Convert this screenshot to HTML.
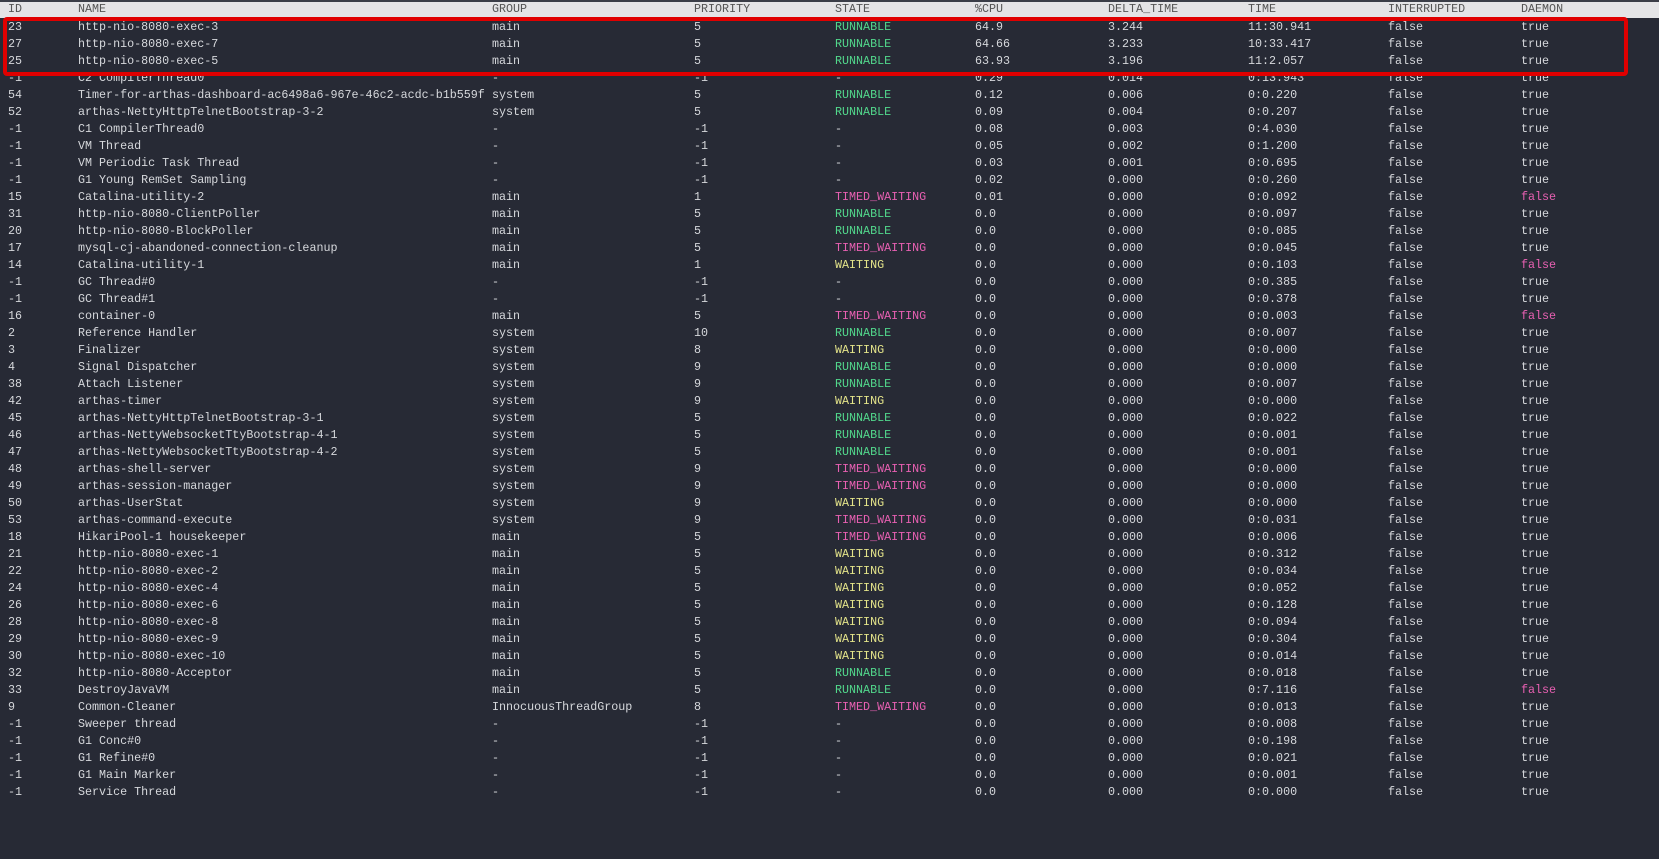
<!DOCTYPE html>
<html><head><meta charset="utf-8"><style>
body{margin:0;width:1659px;height:859px;background:#272a35;overflow:hidden;font-family:"Liberation Mono",monospace;font-size:11.7px;color:#d6d8dc}
.hd{position:absolute;left:0;top:2px;width:1659px;height:16px;background:#e4e4e6;color:#555}
.top{position:absolute;left:0;top:0;width:1659px;height:2px;background:#3a3d47}
.r{position:absolute;left:0;height:17px;line-height:17px;width:1659px;white-space:pre}
.r span{position:absolute}
.r span:nth-child(1){left:8px}.r span:nth-child(2){left:78px}.r span:nth-child(3){left:492px}.r span:nth-child(4){left:694px}.r span:nth-child(5){left:835px}.r span:nth-child(6){left:975px}.r span:nth-child(7){left:1108px}.r span:nth-child(8){left:1248px}.r span:nth-child(9){left:1388px}.r span:nth-child(10){left:1521px}
.g{color:#52d88c}.p{color:#e860b2}.y{color:#e4e48a}
.box{position:absolute;left:3px;top:17px;width:1617px;height:51px;border:4px solid #e00000;border-radius:4px}
</style></head><body>
<div class="top"></div>
<div class="hd"><div class="r" style="top:-1px;line-height:17px"><span>ID</span><span>NAME</span><span>GROUP</span><span>PRIORITY</span><span>STATE</span><span>%CPU</span><span>DELTA_TIME</span><span>TIME</span><span>INTERRUPTED</span><span>DAEMON</span></div></div>
<div class="r" style="top:19px"><span>23</span><span>http-nio-8080-exec-3</span><span>main</span><span>5</span><span class="g">RUNNABLE</span><span>64.9</span><span>3.244</span><span>11:30.941</span><span>false</span><span>true</span></div>
<div class="r" style="top:36px"><span>27</span><span>http-nio-8080-exec-7</span><span>main</span><span>5</span><span class="g">RUNNABLE</span><span>64.66</span><span>3.233</span><span>10:33.417</span><span>false</span><span>true</span></div>
<div class="r" style="top:53px"><span>25</span><span>http-nio-8080-exec-5</span><span>main</span><span>5</span><span class="g">RUNNABLE</span><span>63.93</span><span>3.196</span><span>11:2.057</span><span>false</span><span>true</span></div>
<div class="r" style="top:70px"><span>-1</span><span>C2 CompilerThread0</span><span>-</span><span>-1</span><span>-</span><span>0.29</span><span>0.014</span><span>0:13.943</span><span>false</span><span>true</span></div>
<div class="r" style="top:87px"><span>54</span><span>Timer-for-arthas-dashboard-ac6498a6-967e-46c2-acdc-b1b559f</span><span>system</span><span>5</span><span class="g">RUNNABLE</span><span>0.12</span><span>0.006</span><span>0:0.220</span><span>false</span><span>true</span></div>
<div class="r" style="top:104px"><span>52</span><span>arthas-NettyHttpTelnetBootstrap-3-2</span><span>system</span><span>5</span><span class="g">RUNNABLE</span><span>0.09</span><span>0.004</span><span>0:0.207</span><span>false</span><span>true</span></div>
<div class="r" style="top:121px"><span>-1</span><span>C1 CompilerThread0</span><span>-</span><span>-1</span><span>-</span><span>0.08</span><span>0.003</span><span>0:4.030</span><span>false</span><span>true</span></div>
<div class="r" style="top:138px"><span>-1</span><span>VM Thread</span><span>-</span><span>-1</span><span>-</span><span>0.05</span><span>0.002</span><span>0:1.200</span><span>false</span><span>true</span></div>
<div class="r" style="top:155px"><span>-1</span><span>VM Periodic Task Thread</span><span>-</span><span>-1</span><span>-</span><span>0.03</span><span>0.001</span><span>0:0.695</span><span>false</span><span>true</span></div>
<div class="r" style="top:172px"><span>-1</span><span>G1 Young RemSet Sampling</span><span>-</span><span>-1</span><span>-</span><span>0.02</span><span>0.000</span><span>0:0.260</span><span>false</span><span>true</span></div>
<div class="r" style="top:189px"><span>15</span><span>Catalina-utility-2</span><span>main</span><span>1</span><span class="p">TIMED_WAITING</span><span>0.01</span><span>0.000</span><span>0:0.092</span><span>false</span><span class="p">false</span></div>
<div class="r" style="top:206px"><span>31</span><span>http-nio-8080-ClientPoller</span><span>main</span><span>5</span><span class="g">RUNNABLE</span><span>0.0</span><span>0.000</span><span>0:0.097</span><span>false</span><span>true</span></div>
<div class="r" style="top:223px"><span>20</span><span>http-nio-8080-BlockPoller</span><span>main</span><span>5</span><span class="g">RUNNABLE</span><span>0.0</span><span>0.000</span><span>0:0.085</span><span>false</span><span>true</span></div>
<div class="r" style="top:240px"><span>17</span><span>mysql-cj-abandoned-connection-cleanup</span><span>main</span><span>5</span><span class="p">TIMED_WAITING</span><span>0.0</span><span>0.000</span><span>0:0.045</span><span>false</span><span>true</span></div>
<div class="r" style="top:257px"><span>14</span><span>Catalina-utility-1</span><span>main</span><span>1</span><span class="y">WAITING</span><span>0.0</span><span>0.000</span><span>0:0.103</span><span>false</span><span class="p">false</span></div>
<div class="r" style="top:274px"><span>-1</span><span>GC Thread#0</span><span>-</span><span>-1</span><span>-</span><span>0.0</span><span>0.000</span><span>0:0.385</span><span>false</span><span>true</span></div>
<div class="r" style="top:291px"><span>-1</span><span>GC Thread#1</span><span>-</span><span>-1</span><span>-</span><span>0.0</span><span>0.000</span><span>0:0.378</span><span>false</span><span>true</span></div>
<div class="r" style="top:308px"><span>16</span><span>container-0</span><span>main</span><span>5</span><span class="p">TIMED_WAITING</span><span>0.0</span><span>0.000</span><span>0:0.003</span><span>false</span><span class="p">false</span></div>
<div class="r" style="top:325px"><span>2</span><span>Reference Handler</span><span>system</span><span>10</span><span class="g">RUNNABLE</span><span>0.0</span><span>0.000</span><span>0:0.007</span><span>false</span><span>true</span></div>
<div class="r" style="top:342px"><span>3</span><span>Finalizer</span><span>system</span><span>8</span><span class="y">WAITING</span><span>0.0</span><span>0.000</span><span>0:0.000</span><span>false</span><span>true</span></div>
<div class="r" style="top:359px"><span>4</span><span>Signal Dispatcher</span><span>system</span><span>9</span><span class="g">RUNNABLE</span><span>0.0</span><span>0.000</span><span>0:0.000</span><span>false</span><span>true</span></div>
<div class="r" style="top:376px"><span>38</span><span>Attach Listener</span><span>system</span><span>9</span><span class="g">RUNNABLE</span><span>0.0</span><span>0.000</span><span>0:0.007</span><span>false</span><span>true</span></div>
<div class="r" style="top:393px"><span>42</span><span>arthas-timer</span><span>system</span><span>9</span><span class="y">WAITING</span><span>0.0</span><span>0.000</span><span>0:0.000</span><span>false</span><span>true</span></div>
<div class="r" style="top:410px"><span>45</span><span>arthas-NettyHttpTelnetBootstrap-3-1</span><span>system</span><span>5</span><span class="g">RUNNABLE</span><span>0.0</span><span>0.000</span><span>0:0.022</span><span>false</span><span>true</span></div>
<div class="r" style="top:427px"><span>46</span><span>arthas-NettyWebsocketTtyBootstrap-4-1</span><span>system</span><span>5</span><span class="g">RUNNABLE</span><span>0.0</span><span>0.000</span><span>0:0.001</span><span>false</span><span>true</span></div>
<div class="r" style="top:444px"><span>47</span><span>arthas-NettyWebsocketTtyBootstrap-4-2</span><span>system</span><span>5</span><span class="g">RUNNABLE</span><span>0.0</span><span>0.000</span><span>0:0.001</span><span>false</span><span>true</span></div>
<div class="r" style="top:461px"><span>48</span><span>arthas-shell-server</span><span>system</span><span>9</span><span class="p">TIMED_WAITING</span><span>0.0</span><span>0.000</span><span>0:0.000</span><span>false</span><span>true</span></div>
<div class="r" style="top:478px"><span>49</span><span>arthas-session-manager</span><span>system</span><span>9</span><span class="p">TIMED_WAITING</span><span>0.0</span><span>0.000</span><span>0:0.000</span><span>false</span><span>true</span></div>
<div class="r" style="top:495px"><span>50</span><span>arthas-UserStat</span><span>system</span><span>9</span><span class="y">WAITING</span><span>0.0</span><span>0.000</span><span>0:0.000</span><span>false</span><span>true</span></div>
<div class="r" style="top:512px"><span>53</span><span>arthas-command-execute</span><span>system</span><span>9</span><span class="p">TIMED_WAITING</span><span>0.0</span><span>0.000</span><span>0:0.031</span><span>false</span><span>true</span></div>
<div class="r" style="top:529px"><span>18</span><span>HikariPool-1 housekeeper</span><span>main</span><span>5</span><span class="p">TIMED_WAITING</span><span>0.0</span><span>0.000</span><span>0:0.006</span><span>false</span><span>true</span></div>
<div class="r" style="top:546px"><span>21</span><span>http-nio-8080-exec-1</span><span>main</span><span>5</span><span class="y">WAITING</span><span>0.0</span><span>0.000</span><span>0:0.312</span><span>false</span><span>true</span></div>
<div class="r" style="top:563px"><span>22</span><span>http-nio-8080-exec-2</span><span>main</span><span>5</span><span class="y">WAITING</span><span>0.0</span><span>0.000</span><span>0:0.034</span><span>false</span><span>true</span></div>
<div class="r" style="top:580px"><span>24</span><span>http-nio-8080-exec-4</span><span>main</span><span>5</span><span class="y">WAITING</span><span>0.0</span><span>0.000</span><span>0:0.052</span><span>false</span><span>true</span></div>
<div class="r" style="top:597px"><span>26</span><span>http-nio-8080-exec-6</span><span>main</span><span>5</span><span class="y">WAITING</span><span>0.0</span><span>0.000</span><span>0:0.128</span><span>false</span><span>true</span></div>
<div class="r" style="top:614px"><span>28</span><span>http-nio-8080-exec-8</span><span>main</span><span>5</span><span class="y">WAITING</span><span>0.0</span><span>0.000</span><span>0:0.094</span><span>false</span><span>true</span></div>
<div class="r" style="top:631px"><span>29</span><span>http-nio-8080-exec-9</span><span>main</span><span>5</span><span class="y">WAITING</span><span>0.0</span><span>0.000</span><span>0:0.304</span><span>false</span><span>true</span></div>
<div class="r" style="top:648px"><span>30</span><span>http-nio-8080-exec-10</span><span>main</span><span>5</span><span class="y">WAITING</span><span>0.0</span><span>0.000</span><span>0:0.014</span><span>false</span><span>true</span></div>
<div class="r" style="top:665px"><span>32</span><span>http-nio-8080-Acceptor</span><span>main</span><span>5</span><span class="g">RUNNABLE</span><span>0.0</span><span>0.000</span><span>0:0.018</span><span>false</span><span>true</span></div>
<div class="r" style="top:682px"><span>33</span><span>DestroyJavaVM</span><span>main</span><span>5</span><span class="g">RUNNABLE</span><span>0.0</span><span>0.000</span><span>0:7.116</span><span>false</span><span class="p">false</span></div>
<div class="r" style="top:699px"><span>9</span><span>Common-Cleaner</span><span>InnocuousThreadGroup</span><span>8</span><span class="p">TIMED_WAITING</span><span>0.0</span><span>0.000</span><span>0:0.013</span><span>false</span><span>true</span></div>
<div class="r" style="top:716px"><span>-1</span><span>Sweeper thread</span><span>-</span><span>-1</span><span>-</span><span>0.0</span><span>0.000</span><span>0:0.008</span><span>false</span><span>true</span></div>
<div class="r" style="top:733px"><span>-1</span><span>G1 Conc#0</span><span>-</span><span>-1</span><span>-</span><span>0.0</span><span>0.000</span><span>0:0.198</span><span>false</span><span>true</span></div>
<div class="r" style="top:750px"><span>-1</span><span>G1 Refine#0</span><span>-</span><span>-1</span><span>-</span><span>0.0</span><span>0.000</span><span>0:0.021</span><span>false</span><span>true</span></div>
<div class="r" style="top:767px"><span>-1</span><span>G1 Main Marker</span><span>-</span><span>-1</span><span>-</span><span>0.0</span><span>0.000</span><span>0:0.001</span><span>false</span><span>true</span></div>
<div class="r" style="top:784px"><span>-1</span><span>Service Thread</span><span>-</span><span>-1</span><span>-</span><span>0.0</span><span>0.000</span><span>0:0.000</span><span>false</span><span>true</span></div>
<div class="box"></div>
</body></html>
